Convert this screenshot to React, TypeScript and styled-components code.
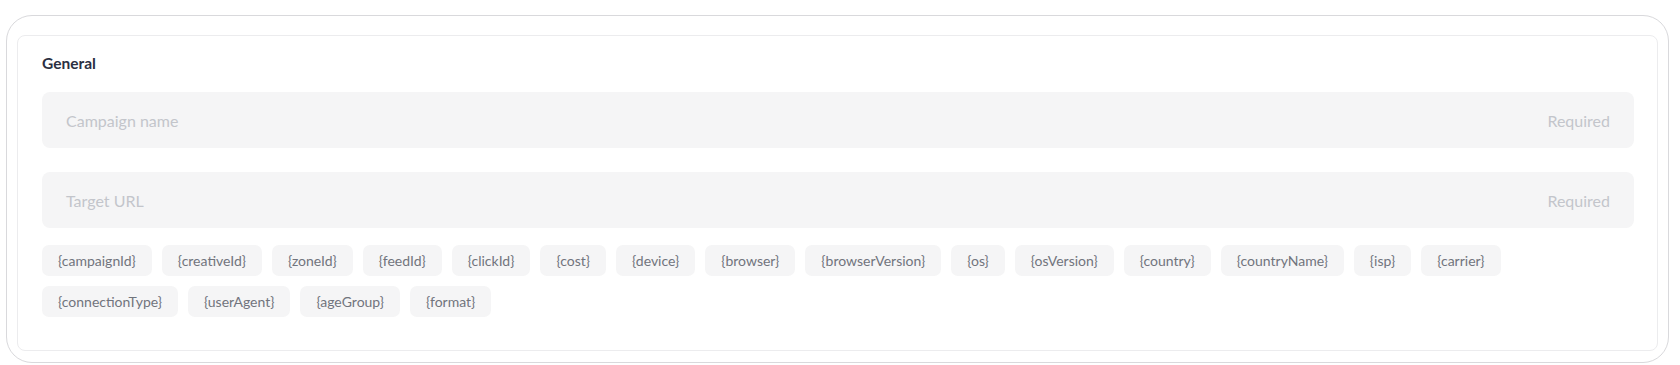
import React from "react";
import styled, { createGlobalStyle } from "styled-components";

const GlobalStyle = createGlobalStyle`
  body {
    margin: 0;
    background: #ffffff;
    font-family: "Lato", "Open Sans", sans-serif;
  }
`;

const Frame = styled.div`
  margin: 15px 11px 0 6px;
  border: 1.5px solid #d9d9dc;
  border-radius: 26px;
  padding: 19px 10px 11px 10px;
`;

const Card = styled.section`
  display: flex;
  flex-direction: column;
  border: 1px solid #ececee;
  border-radius: 8px;
  padding: 17px 23px 33px 24px;
`;

const Title = styled.h3`
  margin: 0 0 19px;
  font-size: 15.5px;
  line-height: 20px;
  font-weight: 700;
  color: #2b2f42;
`;

const Field = styled.div<{ $gap: number }>`
  display: flex;
  align-items: center;
  justify-content: space-between;
  height: 56px;
  padding: 0 24px;
  border-radius: 8px;
  background: #f5f5f6;
  margin-bottom: ${(p) => p.$gap}px;
`;

const Placeholder = styled.span`
  font-size: 16px;
  color: #c3c5cb;
`;

const Hint = styled.span`
  font-size: 16px;
  color: #c3c5cb;
`;

const Chips = styled.div`
  display: flex;
  flex-wrap: wrap;
  gap: 10px 10px;
`;

const Chip = styled.span`
  display: inline-flex;
  align-items: center;
  height: 31px;
  padding: 0 16px;
  border-radius: 7px;
  background: #f5f5f6;
  font-size: 14px;
  color: #71747d;
`;

const macros = [
  "campaignId",
  "creativeId",
  "zoneId",
  "feedId",
  "clickId",
  "cost",
  "device",
  "browser",
  "browserVersion",
  "os",
  "osVersion",
  "country",
  "countryName",
  "isp",
  "carrier",
  "connectionType",
  "userAgent",
  "ageGroup",
  "format",
];

function App() {
  return (
    <>
      <GlobalStyle />
      <Frame>
        <Card>
          <Title>General</Title>
          <Field $gap={24}>
            <Placeholder>Campaign name</Placeholder>
            <Hint>Required</Hint>
          </Field>
          <Field $gap={17}>
            <Placeholder>Target URL</Placeholder>
            <Hint>Required</Hint>
          </Field>
          <Chips>
            {macros.map((m) => (
              <Chip key={m}>{`{${m}}`}</Chip>
            ))}
          </Chips>
        </Card>
      </Frame>
    </>
  );
}

export default App;
